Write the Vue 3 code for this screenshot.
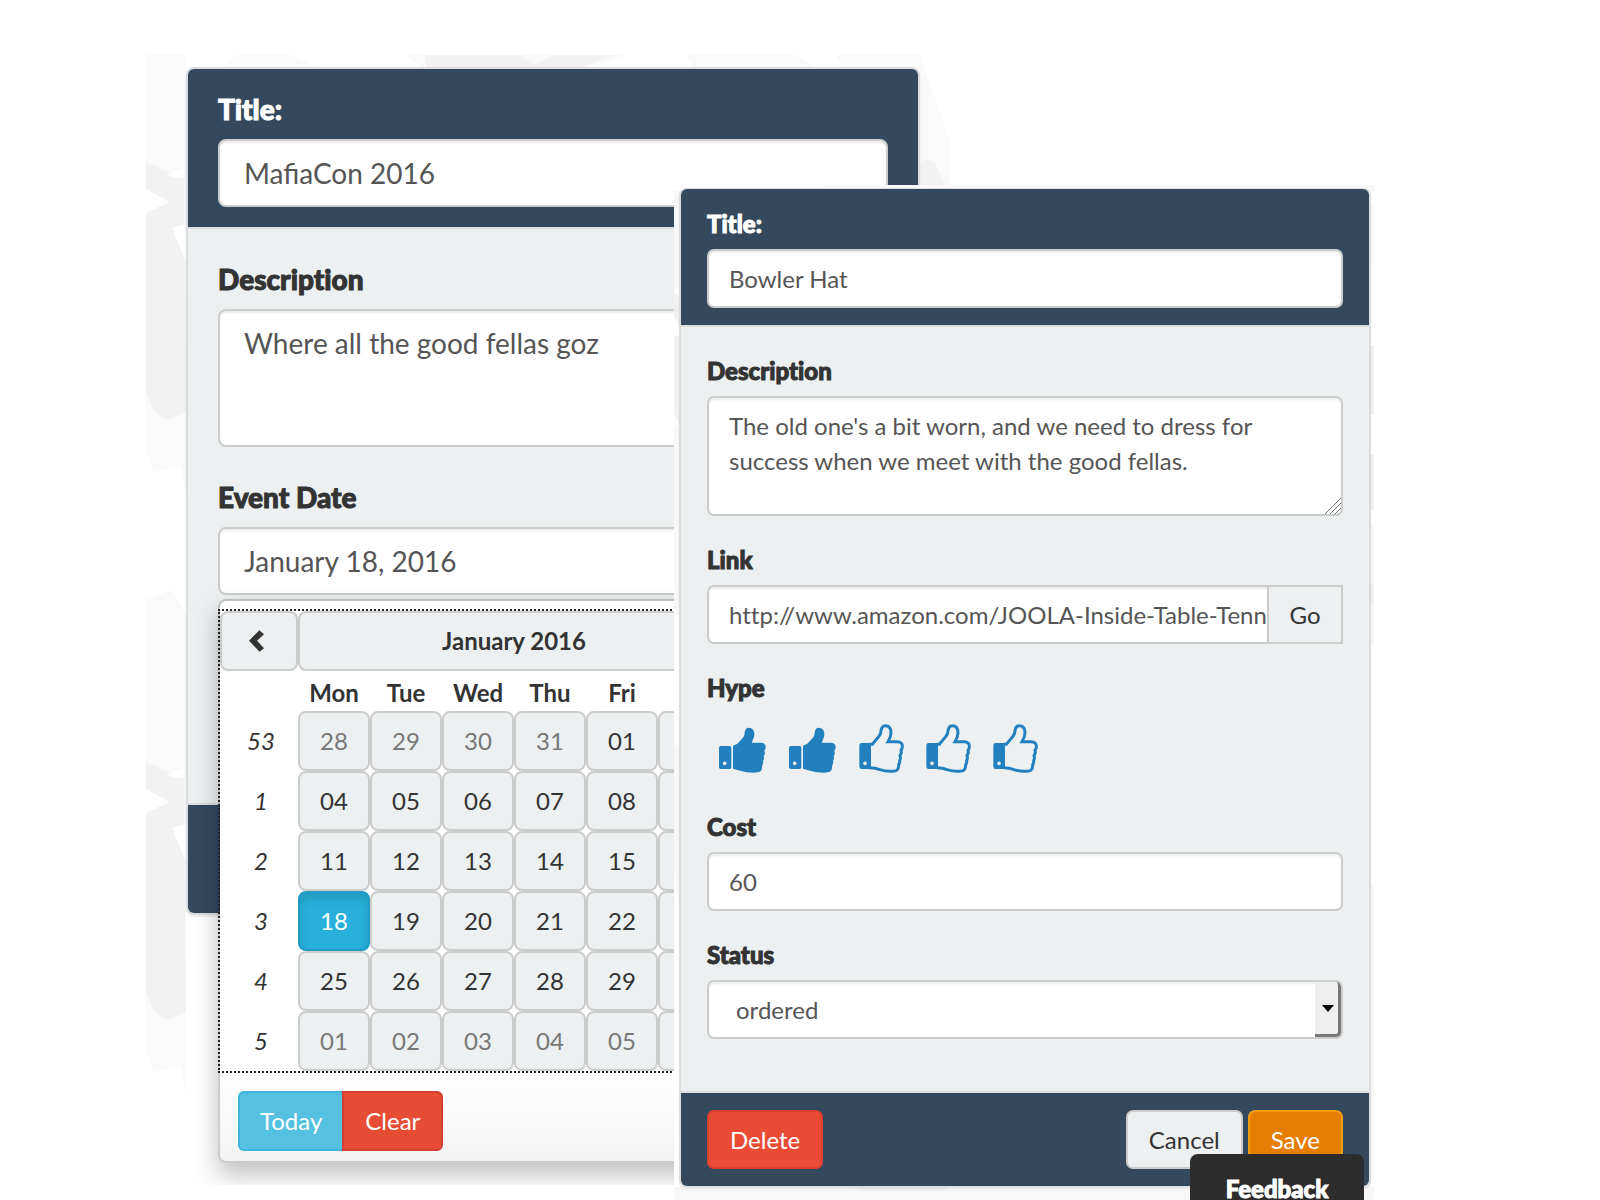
<script setup>
import { ref } from 'vue'

const eventTitle = ref('MafiaCon 2016')
const eventDescription = ref('Where all the good fellas goz')
const eventDate = ref('January 18, 2016')

const itemTitle = ref('Bowler Hat')
const itemDescription = ref("The old one's a bit worn, and we need to dress for success when we meet with the good fellas.")
const itemLink = ref('http://www.amazon.com/JOOLA-Inside-Table-Tenn')
const itemCost = ref('60')
const itemStatus = ref('ordered')
const hype = ref(2)

const weekdays = ['Mon', 'Tue', 'Wed', 'Thu', 'Fri']
const columns = 7
const pad = (n) => String(n).padStart(2, '0')

// Six weeks starting on Monday, 28 December 2015; weekend cells carry no number
const weeks = ['53', '1', '2', '3', '4', '5'].map((number, row) => ({
  number,
  days: Array.from({ length: columns }, (_, col) => {
    const date = new Date(2015, 11, 28 + row * 7 + col)
    return {
      label: col < weekdays.length ? pad(date.getDate()) : '',
      name: date.toDateString(),
      muted: date.getMonth() !== 0,
      selected: date.getMonth() === 0 && date.getDate() === 18,
    }
  }),
}))
</script>

<template>
  <main class="stage">
    <section class="shot shot-event">
      <svg class="pattern" aria-hidden="true">
        <defs>
          <pattern id="shards" width="804" height="600" patternUnits="userSpaceOnUse">
            <path fill="#fafafa" d="M0 0H40V440L34 410L8 417L0 395ZM0 545L26 535L40 560V600H0ZM90 0H145L175 14V30H60ZM259 0H480L440 14H280ZM539 0H650L700 30H560ZM690 0H774L804 87V130H760Z" />
            <path fill="#f2f2f2" d="M0 107L38 124L40 357L24 364Q12 364 6 352L0 337ZM278 0H374L386 9Q392 11 398 4L410 0H467L437 12L420 60H290ZM774 107Q784 102 790 110L804 140V200H774Z" />
            <path fill="#fff" d="M20 120L38 113L37 124ZM0 134L24 147L0 158ZM26 173L40 169V207Z" />
          </pattern>
        </defs>
        <rect width="100%" height="100%" fill="url(#shards)" />
      </svg>
      <form class="card card-event" @submit.prevent>
        <header class="bar">
          <label for="event-title">Title:</label>
          <input id="event-title" v-model="eventTitle" class="control" type="text" />
        </header>
        <div class="body">
          <div class="group">
            <label for="event-description">Description</label>
            <textarea id="event-description" v-model="eventDescription" class="control"></textarea>
          </div>
          <div class="group">
            <label for="event-date">Event Date</label>
            <input id="event-date" v-model="eventDate" class="control" type="text" />
            <div class="picker">
              <table class="calendar">
                <thead>
                  <tr>
                    <th class="week">
                      <button type="button" class="cell" aria-label="Previous month">
                        <svg class="chevron" viewBox="0 0 45 65" aria-hidden="true"><path d="M0 32L31 0L45 12L24 32L45 54L32 65Z" /></svg>
                      </button>
                    </th>
                    <th colspan="6"><button type="button" class="cell month">January 2016</button></th>
                    <th><button type="button" class="cell" aria-label="Next month"></button></th>
                  </tr>
                  <tr class="weekdays">
                    <th></th>
                    <th v-for="day in weekdays" :key="day" scope="col">{{ day }}</th>
                    <th colspan="2"></th>
                  </tr>
                </thead>
                <tbody>
                  <tr v-for="week in weeks" :key="week.number">
                    <td class="number">{{ week.number }}</td>
                    <td v-for="day in week.days" :key="day.name">
                      <button type="button" class="cell" :class="{ muted: day.muted, selected: day.selected }" :aria-label="day.name">{{ day.label }}</button>
                    </td>
                  </tr>
                </tbody>
              </table>
              <div class="picker-actions">
                <button type="button" class="today">Today</button>
                <button type="button" class="clear">Clear</button>
              </div>
            </div>
          </div>
        </div>
        <footer class="bar bar-empty"></footer>
      </form>
    </section>

    <section class="shot shot-item">
      <svg class="pattern" aria-hidden="true">
        <path fill="#f8f8f8" d="M0 6H6V104H0ZM0 240H6V430H0ZM150 0H700V6H150ZM696 20H700V80H696ZM696 340H700V460H696ZM696 700H700V990H696ZM0 560H6V720L0 690ZM0 1002H700V1015H0Z" />
        <path fill="#f1f1f1" d="M0 108L6 112V140L0 132ZM0 150L6 152V240L0 228ZM696 160H700V230H696ZM696 270H700V325H696ZM696 400H700V420H696ZM170 1000H278L270 1006H190Z" />
      </svg>
      <form class="card card-item" @submit.prevent>
        <header class="bar">
          <label for="item-title">Title:</label>
          <input id="item-title" v-model="itemTitle" class="control" type="text" />
        </header>
        <div class="body">
          <div class="group">
            <label for="item-description">Description</label>
            <div class="overlay-host">
              <textarea id="item-description" v-model="itemDescription" class="control"></textarea>
              <svg class="grip" viewBox="0 0 16 16" aria-hidden="true"><path d="M0 16L16 0M5 16L16 5M10 16L16 10" /></svg>
            </div>
          </div>
          <div class="group">
            <label for="item-link">Link</label>
            <div class="joined">
              <input id="item-link" v-model="itemLink" class="control" type="text" />
              <button type="button" class="go">Go</button>
            </div>
          </div>
          <div class="group">
            <span id="hype-label" class="label">Hype</span>
            <div class="hype" role="group" aria-labelledby="hype-label">
              <button v-for="n in 5" :key="n" type="button" class="thumb" :class="{ on: n <= hype }" :aria-label="`Hype ${n}`" @click="hype = n">
                <svg v-if="n <= hype" width="47" height="49" viewBox="57 42 141 147" aria-hidden="true">
                  <path fill="currentColor" fill-rule="evenodd" d="M62 108H89Q94 108 94 113V172Q94 177 89 177H62Q57 177 57 172V113Q57 108 62 108ZM74 154.500a5.500 5.500 0 1 0 .1 0Z" />
                  <path fill="currentColor" d="M99 110Q99 106 104 105Q111 104 117 96Q127 85 131 80Q134 75 134 67Q136 53 146 53Q163 54 163 73Q163 82 155 98H184Q197 99 197 112Q197 118 193 122Q196 129 193 136Q190 138 192 144Q192 150 189 153Q191 160 187 165Q187 178 182 184Q177 188 160 188Q140 188 120 182Q103 177 99 176Z" />
                </svg>
                <svg v-else width="45" height="49" viewBox="477 42 135 147" aria-hidden="true">
                  <path fill="currentColor" fill-rule="evenodd" d="M485 99H513V177H485Q478 177 478 170V106Q478 99 485 99ZM495 154.500a5.500 5.500 0 1 0 .1 0Z" />
                  <path fill="none" stroke="currentColor" stroke-width="9" d="M510 103H517Q523 96 531 86Q541 75 542 68Q544 47 556 47Q573 47 573 68Q573 80 564 95H591Q608 96 607 110Q607 117 603 121Q606 129 600 137Q603 144 599 152Q600 158 596 164Q597 174 590 181Q586 184 570 184Q556 184 540 179Q526 173 510 173" />
                </svg>
              </button>
            </div>
          </div>
          <div class="group">
            <label for="item-cost">Cost</label>
            <input id="item-cost" v-model="itemCost" class="control" type="text" />
          </div>
          <div class="group">
            <label for="item-status">Status</label>
            <div class="overlay-host">
              <select id="item-status" v-model="itemStatus" class="control">
                <option>ordered</option>
              </select>
              <span class="drop" aria-hidden="true"></span>
            </div>
          </div>
        </div>
        <footer class="bar actions">
          <button type="button" class="btn delete">Delete</button>
          <button type="button" class="btn cancel">Cancel</button>
          <button type="submit" class="btn save">Save</button>
        </footer>
      </form>
      <button type="button" class="feedback">Feedback</button>
    </section>
  </main>
</template>

<style>
body {
  background: #fff;
}
</style>

<style scoped>
*,
*::before,
*::after {
  box-sizing: border-box;
}

.stage {
  display: grid;
  grid-template-columns:
    minmax(0, 146fr) minmax(0, 528fr) minmax(0, 276fr)
    minmax(0, 424fr) minmax(0, 226fr);
  align-items: start;
  font-family: Lato, 'Liberation Sans', sans-serif;
  color: #333;
}

.shot {
  position: relative;
  isolation: isolate;
  grid-row: 1;
  overflow: hidden;
  background: #fff;
}

.shot-event {
  grid-column: 2 / 4;
  margin-top: 55px;
  padding: 12px 30px 24px 40px;
  height: 1130px;
}

.shot-item {
  z-index: 1;
  grid-column: 3 / 5;
  margin-top: 185px;
  padding: 3px 3px 13px 5px;
}

.pattern {
  position: absolute;
  inset: 0;
  width: 100%;
  height: 100%;
}

.card {
  position: relative;
  border: 2px solid #ddd;
  background: #ecf0f1;
  box-shadow: 0 2px 2px rgba(0, 0, 0, 0.08);
}

.card-event {
  border-radius: 8px;
  font-size: 28px;
  line-height: 40px;
}

.card-item {
  border-width: 1px 2px;
  border-radius: 7px;
  font-size: 24px;
  line-height: 35px;
}

button,
input,
select,
textarea {
  margin: 0;
  font: inherit;
}

button {
  cursor: pointer;
}

label,
.label {
  display: block;
  font-weight: 900;
  font-variant-ligatures: none;
  -webkit-text-stroke: 1px currentColor;
}

.bar {
  background: #34485e;
  color: #fff;
}

.card header {
  border-radius: 6px 6px 0 0;
  border-bottom: 2px solid #ddd;
  background-clip: padding-box;
}

.card footer {
  border-top: 2px solid #ddd;
  border-radius: 0 0 6px 6px;
}

.control {
  display: block;
  width: 100%;
  border: 2px solid #ccc;
  background: #fff;
  color: #555;
  box-shadow: inset 0 2px 2px rgba(0, 0, 0, 0.075);
  outline: none;
  resize: none;
}

.card-event .bar {
  padding: 20px 30px;
}

.card-event .bar-empty {
  min-height: 110px;
}

.card-event .body {
  min-height: 574px;
  padding: 30px;
}

.card-event label {
  margin-bottom: 10px;
}

.card-event .group {
  position: relative;
  margin-bottom: 30px;
}

.card-event .control {
  height: 68px;
  padding: 12px 24px;
  border-radius: 8px;
}

.card-event textarea.control {
  height: 138px;
}

.picker {
  position: absolute;
  z-index: 2;
  top: 100%;
  left: 0;
  margin-top: 4px;
  padding-top: 10px;
  border: 2px solid rgba(0, 0, 0, 0.2);
  border-radius: 8px;
  background: linear-gradient(#fff 85%, #f3f3f3) padding-box;
  box-shadow: 0 12px 24px rgba(0, 0, 0, 0.25);
  font-size: 24px;
  line-height: 36px;
}

.calendar {
  width: 582px;
  table-layout: fixed;
  border-spacing: 0;
  outline: 2px dotted #222;
  background: #fff;
  text-align: center;
}

.calendar th,
.calendar td {
  padding: 0;
}

.calendar .week {
  width: 78px;
}

.calendar .weekdays th {
  padding-top: 4px;
}

.calendar .number {
  padding-left: 4px;
  font-style: italic;
}

.cell {
  display: block;
  width: 100%;
  height: 60px;
  padding: 0;
  border: 2px solid #ccc;
  border-radius: 8px;
  background: #ecf0f1;
  color: #333;
  text-align: center;
}

.month {
  font-weight: 700;
}

.muted {
  color: #777;
}

.selected {
  border-color: #1f9bc4;
  background: #27b0db;
  box-shadow: inset 0 6px 10px rgba(0, 0, 0, 0.125);
  color: #fff;
}

.chevron {
  display: block;
  width: 15px;
  height: 22px;
  margin: 0 auto 0 27px;
  fill: #333;
}

.picker-actions {
  display: flex;
  padding: 20px 18px 10px;
}

.picker-actions button {
  height: 60px;
  padding: 0 20px;
  border: 2px solid #3fb4dc;
  color: #fff;
}

.picker-actions .today {
  border-right: 0;
  border-radius: 6px 0 0 6px;
  background: #56c0e0;
}

.picker-actions .clear {
  padding: 0 21px;
  border-color: #d43f33;
  border-radius: 0 6px 6px 0;
  background: #e74c35;
}

.card-item .bar {
  padding: 17px 26px;
}

.card-item .body {
  padding: 26px 26px 52px;
}

.card-item label,
.card-item .label {
  margin-bottom: 8px;
}

.card-item .group + .group {
  margin-top: 26px;
}

.card-item .control {
  height: 59px;
  padding: 10px 20px;
  border-radius: 7px;
}

.card-item textarea.control {
  height: 120px;
}

.card-item select.control {
  padding-left: 27px;
  appearance: none;
}

.overlay-host {
  position: relative;
}

.grip {
  position: absolute;
  right: 2px;
  bottom: 2px;
  width: 16px;
  height: 16px;
  fill: none;
  stroke: #777;
}

.drop {
  position: absolute;
  top: 2px;
  right: 2px;
  bottom: 2px;
  width: 26px;
  border: solid #777;
  border-width: 0 3px 3px 0;
  border-radius: 0 5px 5px 0;
  background: #efefef;
}

.drop::after {
  content: '';
  position: absolute;
  top: 23px;
  left: 7px;
  border: 6px solid transparent;
  border-top: 7px solid #000;
  border-bottom: 0;
}

.joined {
  display: flex;
}

.card-item .joined .control {
  flex: 1;
  min-width: 0;
  padding-right: 0;
  border-right: 0;
  border-radius: 7px 0 0 7px;
  font-variant-ligatures: none;
}

.go {
  width: 76px;
  padding: 0;
  border: 2px solid #ccc;
  background: #ecf0f1;
  color: #333;
}

.hype {
  display: flex;
  align-items: flex-start;
  height: 70px;
  padding: 11px 12px 0;
  gap: 22px;
}

.thumb {
  padding: 0;
  border: 0;
  background: none;
  color: #2380bf;
  line-height: 0;
}

.thumb.on {
  margin-right: 1px;
}

.actions {
  display: flex;
  gap: 5px;
}

.btn {
  height: 59px;
  padding: 0 21px;
  border: 2px solid #ccc;
  border-radius: 7px;
}

.delete {
  margin-right: auto;
  border-color: #d9402f;
  background: #e94b35;
  color: #fff;
}

.cancel {
  background: #ecf0f1;
  color: #333;
}

.save {
  border-color: #f39c12;
  background: #e67e04;
  color: #fff;
}

.feedback {
  position: absolute;
  right: 10px;
  bottom: 0;
  width: 174px;
  height: 46px;
  padding: 22px 0 0;
  border: 0;
  border-radius: 8px 8px 0 0;
  background: #2c2c2c;
  color: #fff;
  font-size: 24px;
  font-weight: 900;
  line-height: 26px;
  -webkit-text-stroke: 1px currentColor;
}
</style>
